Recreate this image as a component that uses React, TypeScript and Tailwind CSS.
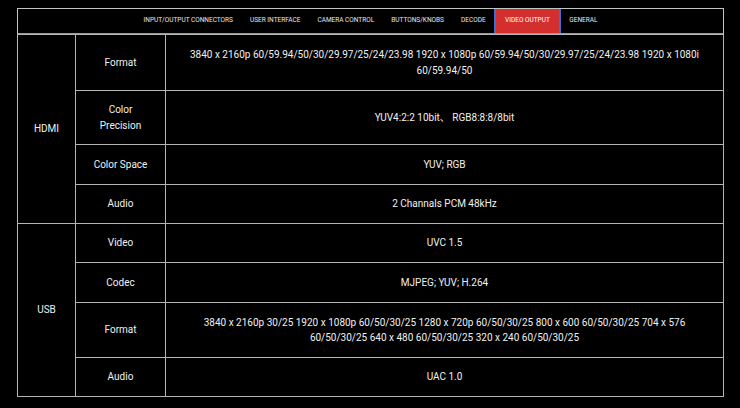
import React from "react"

const tabs = [
  "Input/Output Connectors",
  "User Interface",
  "Camera Control",
  "Buttons/Knobs",
  "Decode",
  "Video Output",
  "General",
]

type Row = { label: React.ReactNode; value: string; h: string }

const hdmi: Row[] = [
  {
    label: "Format",
    value:
      "3840 x 2160p 60/59.94/50/30/29.97/25/24/23.98 1920 x 1080p 60/59.94/50/30/29.97/25/24/23.98 1920 x 1080i 60/59.94/50",
    h: "h-[56px]",
  },
  {
    label: (
      <>
        Color
        <br />
        Precision
      </>
    ),
    value: "YUV4:2:2 10bit、 RGB8:8:8/8bit",
    h: "h-[54px]",
  },
  { label: "Color Space", value: "YUV; RGB", h: "h-[40px]" },
  { label: "Audio", value: "2 Channals PCM 48kHz", h: "h-[39px]" },
]

const usb: Row[] = [
  { label: "Video", value: "UVC 1.5", h: "h-[39px]" },
  { label: "Codec", value: "MJPEG; YUV; H.264", h: "h-[40px]" },
  {
    label: "Format",
    value:
      "3840 x 2160p 30/25 1920 x 1080p 60/50/30/25 1280 x 720p 60/50/30/25 800 x 600 60/50/30/25 704 x 576 60/50/30/25 640 x 480 60/50/30/25 320 x 240 60/50/30/25",
    h: "h-[55px]",
  },
  { label: "Audio", value: "UAC 1.0", h: "h-[39px]" },
]

const cell = "border border-[#b5b5b5] text-center align-middle px-[6px] leading-[15.5px]"

function cn(...c: string[]) {
  return c.join(" ")
}

function Group({ name, rows }: { name: string; rows: Row[] }) {
  return (
    <>
      {rows.map((row, i) => (
        <tr key={i} className={row.h}>
          {i === 0 && (
            <td rowSpan={rows.length} className={cell}>
              {name}
            </td>
          )}
          <td className={cell}>{row.label}</td>
          <td className={cn(cell, "px-[14px]")}>{row.value}</td>
        </tr>
      ))}
    </>
  )
}

export default function App() {
  return (
    <div
      className="w-[740px] h-[408px] bg-black overflow-hidden pt-[8px] pl-[17px]"
      style={{ fontFamily: "Roboto, 'Noto Sans CJK SC', sans-serif" }}
    >
      <div className="w-[707px] border border-[#c4c4c4] border-b-0">
        {/* Tabs */}
        <div className="h-[25px] flex justify-center border-b border-[#9a9a9a]">
          {tabs.map((t) => {
            const active = t === "Video Output"
            return (
              <div
                key={t}
                className={cn(
                  "flex items-center uppercase text-[6.5px]",
                  active
                    ? "bg-[#d32f2f] text-white px-[9px] border-x-2 border-[#3f6fd1]"
                    : "text-[#e6e6e6] px-[8.5px]",
                )}
              >
                {t}
              </div>
            )
          })}
        </div>

        {/* Spec table */}
        <table className="w-[707px] table-fixed border-collapse text-[10px] text-[#f0f0f0] -ml-px">
          <colgroup>
            <col className="w-[58px]" />
            <col className="w-[90px]" />
            <col />
          </colgroup>
          <tbody>
            <Group name="HDMI" rows={hdmi} />
            <Group name="USB" rows={usb} />
          </tbody>
        </table>
      </div>
    </div>
  )
}
